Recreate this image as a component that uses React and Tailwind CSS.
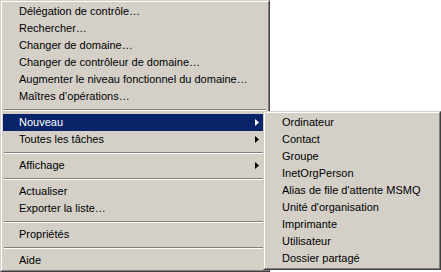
import { Fragment } from "react";

const mainItems = [
  { label: "Délégation de contrôle…" },
  { label: "Rechercher…" },
  { label: "Changer de domaine…" },
  { label: "Changer de contrôleur de domaine…" },
  { label: "Augmenter le niveau fonctionnel du domaine…" },
  { label: "Maîtres d’opérations…" },
  { sep: true },
  { label: "Nouveau", sub: true, active: true },
  { label: "Toutes les tâches", sub: true },
  { sep: true },
  { label: "Affichage", sub: true },
  { sep: true },
  { label: "Actualiser" },
  { label: "Exporter la liste…" },
  { sep: true },
  { label: "Propriétés" },
  { sep: true },
  { label: "Aide" },
];

const subItems = [
  "Ordinateur",
  "Contact",
  "Groupe",
  "InetOrgPerson",
  "Alias de file d'attente MSMQ",
  "Unité d'organisation",
  "Imprimante",
  "Utilisateur",
  "Dossier partagé",
];

function Arrow({ white }) {
  return (
    <svg width="4" height="7" viewBox="0 0 4 7" className="absolute right-[8px] top-[5px]">
      <polygon points="0,0 4,3.5 0,7" fill={white ? "#ffffff" : "#000000"} />
    </svg>
  );
}

function Separator() {
  return (
    <div className="flex h-[9px] flex-col justify-center px-[1px]">
      <div className="h-px bg-[#808080]" />
      <div className="h-px bg-white" />
    </div>
  );
}

function Frame({ className, children }) {
  return (
    <div className={`border border-t-[#d4d0c8] border-l-[#d4d0c8] border-r-[#404040] border-b-[#404040] bg-[#d4d0c8] ${className}`}>
      <div className="flex h-full flex-col border border-t-white border-l-white border-r-[#808080] border-b-[#808080] p-px">
        {children}
      </div>
    </div>
  );
}

export default function App() {
  return (
    <div
      className="relative h-[272px] w-[441px] overflow-hidden bg-white text-[11px] leading-[17px] text-black"
      style={{ fontFamily: '"Liberation Sans", Arial, sans-serif' }}
    >
      <Frame className="h-[272px] w-[270px]">
        {mainItems.map((it, i) =>
          it.sep ? (
            <Separator key={i} />
          ) : (
            <div
              key={i}
              className={`relative h-[17px] pl-[16px] ${it.active ? "bg-[#0a246a] text-white" : ""}`}
            >
              {it.label}
              {it.sub && <Arrow white={it.active} />}
            </div>
          )
        )}
      </Frame>

      {/* submenu de "Nouveau" */}
      <Frame className="absolute left-[263px] top-[111px] h-[159px] w-[178px]">
        {subItems.map((s) => (
          <div key={s} className="h-[17px] pl-[16px]">
            {s}
          </div>
        ))}
      </Frame>
    </div>
  );
}
